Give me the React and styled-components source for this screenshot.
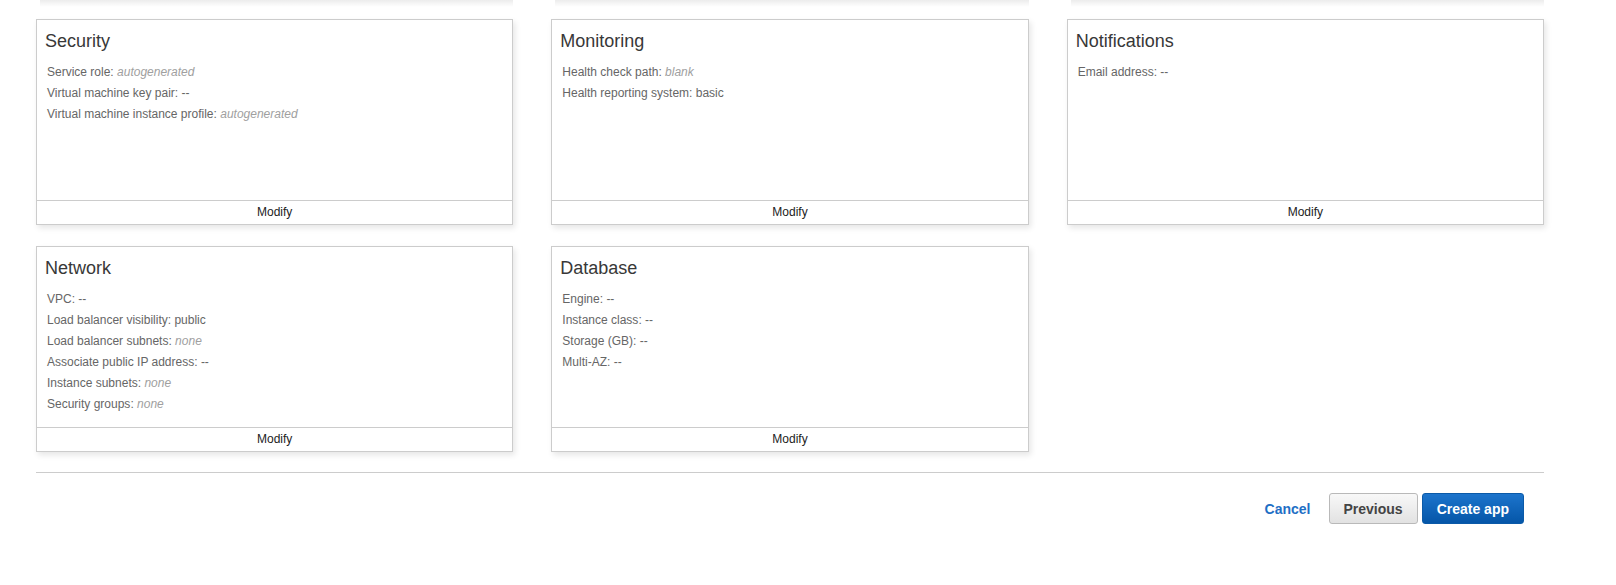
import React from "react";
import styled, { createGlobalStyle } from "styled-components";

const GlobalStyle = createGlobalStyle`
  html, body {
    margin: 0;
    padding: 0;
    background: #ffffff;
  }
  body {
    font-family: "Liberation Sans", Arial, Helvetica, sans-serif;
    color: #333;
  }
  * { box-sizing: border-box; }
`;

const Page = styled.div`
  width: 1616px;
  padding: 0 72px 40px 36px;
`;

const ShadowRow = styled.div`
  display: grid;
  grid-template-columns: repeat(3, 1fr);
  column-gap: 38px;
  height: 7px;
`;

const ShadowStub = styled.div`
  margin-left: 4px;
  background: linear-gradient(to bottom, rgba(0, 0, 0, 0.075), rgba(0, 0, 0, 0));
`;

const CardGrid = styled.div`
  display: grid;
  grid-template-columns: repeat(3, 1fr);
  column-gap: 38px;
  row-gap: 21px;
  margin-top: 12px;
`;

const Card = styled.section`
  display: flex;
  flex-direction: column;
  background: #fff;
  border: 1px solid #cccccc;
  box-shadow: 2px 3px 6px rgba(0, 0, 0, 0.1);
`;

const CardBody = styled.div`
  height: 180px;
  padding: 11px 8px 10px;
`;

const CardTitle = styled.h3`
  margin: 0 0 11px;
  font-size: 18px;
  line-height: 20px;
  font-weight: normal;
  color: #383838;
`;

const Field = styled.div`
  padding-left: 2px;
  font-size: 12px;
  line-height: 21px;
  color: #666;
`;

const Value = styled.span`
  color: ${(p) => (p.$muted ? "#a0a0a0" : "#666")};
  font-style: ${(p) => (p.$muted ? "italic" : "normal")};
`;

const CardFooter = styled.button`
  display: block;
  width: 100%;
  height: 24px;
  padding: 0;
  border: none;
  border-top: 1px solid #cccccc;
  background: #fff;
  font-family: inherit;
  font-size: 12px;
  line-height: 23px;
  color: #222;
  text-align: center;
  cursor: pointer;
`;

const Rule = styled.hr`
  margin: 20px 0 0;
  border: none;
  height: 1px;
  background: #cccccc;
`;

const Actions = styled.div`
  display: flex;
  justify-content: flex-end;
  align-items: center;
  gap: 4px;
  margin-top: 20px;
  padding-right: 20px;
`;

const LinkButton = styled.button`
  margin-right: 14px;
  padding: 0;
  border: none;
  background: none;
  font-family: inherit;
  font-size: 14px;
  font-weight: bold;
  color: #1f6fc5;
  cursor: pointer;
`;

const Button = styled.button`
  height: 31px;
  padding: 0 14px;
  border-radius: 3px;
  font-family: inherit;
  font-size: 14px;
  font-weight: bold;
  cursor: pointer;
  border: 1px solid ${(p) => (p.$primary ? "#0b5aa8" : "#b9b9b9")};
  color: ${(p) => (p.$primary ? "#ffffff" : "#444444")};
  background: ${(p) =>
    p.$primary
      ? "linear-gradient(to bottom, #1c74cc, #0556a8)"
      : "linear-gradient(to bottom, #f8f8f8, #e2e2e2)"};
`;

const cards = [
  {
    title: "Security",
    fields: [
      ["Service role", "autogenerated", true],
      ["Virtual machine key pair", "--", false],
      ["Virtual machine instance profile", "autogenerated", true],
    ],
  },
  {
    title: "Monitoring",
    fields: [
      ["Health check path", "blank", true],
      ["Health reporting system", "basic", false],
    ],
  },
  {
    title: "Notifications",
    fields: [["Email address", "--", false]],
  },
  {
    title: "Network",
    fields: [
      ["VPC", "--", false],
      ["Load balancer visibility", "public", false],
      ["Load balancer subnets", "none", true],
      ["Associate public IP address", "--", false],
      ["Instance subnets", "none", true],
      ["Security groups", "none", true],
    ],
  },
  {
    title: "Database",
    fields: [
      ["Engine", "--", false],
      ["Instance class", "--", false],
      ["Storage (GB)", "--", false],
      ["Multi-AZ", "--", false],
    ],
  },
];

export default function App() {
  return (
    <>
      <GlobalStyle />
      <Page>
        <ShadowRow>
          <ShadowStub />
          <ShadowStub />
          <ShadowStub />
        </ShadowRow>
        <CardGrid>
          {cards.map((card) => (
            <Card key={card.title}>
              <CardBody>
                <CardTitle>{card.title}</CardTitle>
                {card.fields.map(([label, value, muted]) => (
                  <Field key={label}>
                    {label}: <Value $muted={muted}>{value}</Value>
                  </Field>
                ))}
              </CardBody>
              <CardFooter>Modify</CardFooter>
            </Card>
          ))}
        </CardGrid>
        <Rule />
        <Actions>
          <LinkButton>Cancel</LinkButton>
          <Button>Previous</Button>
          <Button $primary>Create app</Button>
        </Actions>
      </Page>
    </>
  );
}
